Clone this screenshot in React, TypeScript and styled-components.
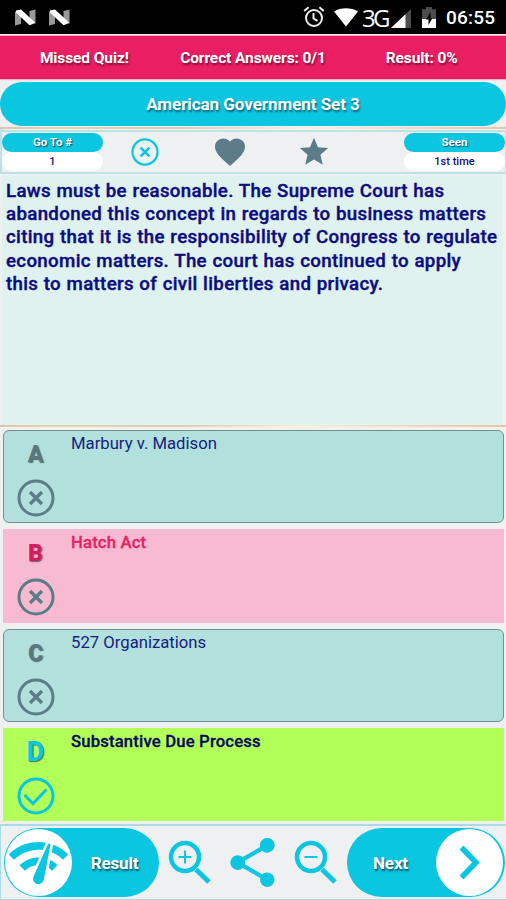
import { ReactNode } from 'react'
import { MdFavorite, MdNetworkCheck, MdShare, MdStar } from 'react-icons/md'
import styled, { createGlobalStyle } from 'styled-components'

type OptionStatus = 'idle' | 'wrong' | 'correct'

interface QuizOption {
  letter: string
  text: string
  status: OptionStatus
}

const options: QuizOption[] = [
  { letter: 'A', text: 'Marbury v. Madison', status: 'idle' },
  { letter: 'B', text: 'Hatch Act', status: 'wrong' },
  { letter: 'C', text: '527 Organizations', status: 'idle' },
  { letter: 'D', text: 'Substantive Due Process', status: 'correct' }
]

const questionLines = [
  'Laws must be reasonable. The Supreme Court has',
  'abandoned this concept in regards to business matters',
  'citing that it is the responsibility of Congress to regulate',
  'economic matters. The court has continued to apply',
  'this to matters of civil liberties and privacy.'
]

const colors = {
  cyan: '#0bc6e0',
  pink: '#e91e63',
  slate: '#5b7c88',
  navy: '#0c0c80',
  page: '#eff0f2'
}

const App = () => (
  <>
    <GlobalStyle />
    <Screen>
      <StatusBar />

      <ScoreBar>
        <Score>Missed Quiz!</Score>
        <Score>Correct Answers: 0/1</Score>
        <Score>Result: 0%</Score>
      </ScoreBar>

      <QuizTitle>American Government Set 3</QuizTitle>
      <Divider />

      <Toolbar>
        <Counter label="Go To #" value="1" />
        <Tools>
          <CrossCircle size={28} color={colors.cyan} />
          <MdFavorite size={36} />
          <MdStar size={34} />
        </Tools>
        <Counter label="Seen" value="1st time" />
      </Toolbar>

      <Question>
        {questionLines.map((line) => (
          <QuestionLine key={line}>{line}</QuestionLine>
        ))}
      </Question>
      <Divider />

      <Options>
        {options.map((option) => (
          <Option key={option.letter} {...option} />
        ))}
      </Options>

      <Footer>
        <ResultButton>
          <Knob>
            <MdNetworkCheck size={65} />
          </Knob>
          <ButtonLabel>Result</ButtonLabel>
        </ResultButton>
        <Actions>
          <Magnifier zoomIn />
          <MdShare size={59} />
          <Magnifier />
        </Actions>
        <NextButton>
          <ButtonLabel>Next</ButtonLabel>
          <Knob>
            <svg width="68" height="68" viewBox="0 0 68 68" fill="none" stroke={colors.cyan} strokeWidth="5.5">
              <path d="M25.5 18.5 40 33.5 25.5 48.5" />
            </svg>
          </Knob>
        </NextButton>
      </Footer>
    </Screen>
  </>
)

export default App

const StatusBar = () => (
  <StatusBarStyled>
    <Notifications>
      <NougatLogo />
      <NougatLogo />
    </Notifications>
    <SystemIcons>
      <svg width="22" height="22" viewBox="0 0 22 22" fill="none" stroke="#eee" strokeWidth="2">
        <circle cx="11" cy="12" r="8" />
        <path d="M10.5 7v5.5l4 2.3M1.2 5 5.6 1.3M20.8 5l-4.4-3.7" />
      </svg>
      <svg width="24" height="19" viewBox="0 0 24 19" fill="#fff">
        <path d="M0 3.5C7-.9 17-.9 24 3.5L12 18.5Z" />
      </svg>
      <NetworkType>3G</NetworkType>
      <Signal width="20" height="19" viewBox="0 0 20 19">
        <path d="M20 0v19H0Z" fill="#4d4d4d" />
        <path d="M14.5 5.2V19H0Z" fill="#fff" />
      </Signal>
      <Battery width="14" height="21" viewBox="0 0 14 21">
        <path d="M4 0h6v2.2h4V21H0V2.2h4Z" fill="#4d4d4d" />
        <path d="M0 12h14v9H0Z" fill="#fff" />
        <path d="M8.5 5 4 12.5h2.5V18L10.5 11H8.5Z" fill="#000" />
      </Battery>
    </SystemIcons>
    <Clock>06:55</Clock>
  </StatusBarStyled>
)

const NougatLogo = () => (
  <svg width="21" height="17" viewBox="0 0 21 17">
    <path d="M0 2.5 6 4v11L0 16.5ZM14.5 2 20.5.5v14l-6 1.5Z" fill="#999" />
    <path d="M1 1.5 6 .5 20 13.5 14.5 16.2 1 3.5Z" fill="#fff" />
  </svg>
)

const Counter = ({ label, value }: { label: string; value: string }) => (
  <CounterStyled>
    <CounterLabel>{label}</CounterLabel>
    <CounterValue>{value}</CounterValue>
  </CounterStyled>
)

const CrossCircle = ({ size, color }: { size: number; color: string }) => (
  <svg width={size} height={size} viewBox="0 0 38 38" fill="none" stroke={color} strokeWidth="3">
    <circle cx="19" cy="19" r="17" />
    <path d="m13 13 12 12M25 13 13 25" strokeWidth="3.4" />
  </svg>
)

const CheckCircle = () => (
  <svg width="38" height="38" viewBox="0 0 38 38" fill="none" stroke={colors.cyan} strokeWidth="3">
    <circle cx="19" cy="19" r="17" />
    <path d="m7.5 18 8.5 8.5L29.5 12.5" />
  </svg>
)

const Magnifier = ({ zoomIn = false }: { zoomIn?: boolean }) => (
  <svg width="43" height="46" viewBox="0 0 43 46" fill="none" stroke={colors.cyan}>
    <circle cx="17" cy="17" r="14" strokeWidth="4.5" />
    <path d="m28 29.5 13 12.5" strokeWidth="5" />
    <path d={zoomIn ? 'M10.5 17h13M17 10.5v13' : 'M10.5 17h13'} strokeWidth="2" />
  </svg>
)

const Option = ({ letter, text, status }: QuizOption) => {
  const icon: ReactNode = status === 'correct' ? <CheckCircle /> : <CrossCircle size={38} color={colors.slate} />

  return (
    <OptionStyled $status={status}>
      <OptionMark>
        <OptionLetter $status={status}>{letter}</OptionLetter>
        {icon}
      </OptionMark>
      <OptionText $status={status}>{text}</OptionText>
    </OptionStyled>
  )
}

const GlobalStyle = createGlobalStyle`
  body {
    margin: 0;
    overflow: hidden;
    font-family: Roboto, 'Liberation Sans', sans-serif;
  }

  * {
    box-sizing: border-box;
  }

  svg {
    display: block;
    flex-shrink: 0;
  }
`

const Screen = styled.div`
  width: 506px;
  height: 900px;
  display: flex;
  flex-direction: column;
  background: ${colors.page};
`

const StatusBarStyled = styled.div`
  height: 34px;
  flex-shrink: 0;
  display: flex;
  align-items: center;
  padding: 0 10px 0 15px;
  background: #000;
  color: #fff;
`

const Notifications = styled.div`
  display: flex;
  gap: 13px;
`

const SystemIcons = styled.div`
  display: flex;
  align-items: center;
  margin-left: auto;

  > svg:nth-child(2) {
    margin-left: 9px;
  }
`

const NetworkType = styled.span`
  width: 26px;
  margin: 0 3px 0 4px;
  font: 400 24px/34px 'Open Sans', sans-serif;
  letter-spacing: -2.8px;
  padding-top: 1px;
`

const Signal = styled.svg`
  margin-top: 2px;
`

const Battery = styled.svg`
  margin: 0 10px 0 11px;
`

const Clock = styled.span`
  width: 50px;
  font-size: 19px;
  font-weight: 500;
  line-height: 34px;
  letter-spacing: 0.2px;
  padding-top: 2px;
`

const ScoreBar = styled.div`
  height: 43px;
  flex-shrink: 0;
  margin: 2px 0 3px;
  display: grid;
  grid-template-columns: repeat(3, 1fr);
  align-items: center;
  background: ${colors.pink};
  box-shadow: 0 0 1px 1px #f4b0c6;
`

const Score = styled.span`
  color: #fff;
  text-align: center;
  white-space: nowrap;
  font-size: 15.5px;
  font-weight: 700;
  letter-spacing: -0.1px;
  padding-top: 1px;
  text-shadow: 1px 2px 2px rgba(60, 0, 30, 0.6);
`

const QuizTitle = styled.h1`
  height: 44px;
  flex-shrink: 0;
  margin: 0 0 1px;
  border-radius: 22px;
  background: ${colors.cyan};
  color: #fff;
  text-align: center;
  font-size: 17px;
  font-weight: 700;
  line-height: 45px;
  letter-spacing: -0.05px;
  text-shadow: 1px 2px 2px rgba(0, 60, 80, 0.7);
`

const Divider = styled.div`
  height: 3px;
  flex-shrink: 0;
  background: linear-gradient(90deg, #dfc3ad, #ddd7ac 10%, #d9cdb4 35%, #f8f1de 60%, #e2c7a4);
  border-bottom: 1px solid #fbf3ea;
`

const Toolbar = styled.div`
  height: 44px;
  flex-shrink: 0;
  margin-bottom: 2px;
  display: flex;
  justify-content: space-between;
  border: solid #bce3ea;
  border-width: 2px 1px 2px 2px;
`

const Tools = styled.div`
  display: flex;
  align-items: center;
  justify-content: space-between;
  width: 200px;
  margin: 0 45px 0 0;
  color: ${colors.slate};

  > svg:nth-child(2) {
    transform: translateX(2px);
  }
`

const CounterStyled = styled.div`
  width: 101px;
  display: flex;
  flex-direction: column;
  padding-top: 0.5px;
`

const CounterLabel = styled.div`
  height: 19px;
  border-radius: 10px;
  background: ${colors.cyan};
  color: #fff;
  text-align: center;
  font-size: 11.5px;
  font-weight: 700;
  line-height: 19px;
  text-shadow: 1px 1px 1px rgba(0, 50, 70, 0.8);
`

const CounterValue = styled.div`
  height: 19px;
  border-radius: 10px;
  background: #fff;
  color: ${colors.navy};
  text-align: center;
  font-size: 11px;
  font-weight: 500;
  line-height: 19px;
`

const Question = styled.div`
  height: 249px;
  flex-shrink: 0;
  margin: 0 3px 0 2px;
  padding: 4px 0 0 4px;
  background: #dff2f0;
  color: ${colors.navy};
`

const QuestionLine = styled.div`
  white-space: nowrap;
  font-size: 18.7px;
  font-weight: 500;
  line-height: 23.2px;
  letter-spacing: 0.33px;
  word-spacing: 0.5px;
  -webkit-text-stroke: 0.4px currentColor;
`

const Options = styled.div`
  display: flex;
  flex-direction: column;
  gap: 6px;
  padding: 2px 2px 0 3px;
`

const optionBackground = {
  idle: '#b2e1dd',
  wrong: '#f7bad0',
  correct: '#b2ff59'
}

const letterColor = {
  idle: '#587980',
  wrong: '#d81b60',
  correct: colors.cyan
}

const textColor = {
  idle: '#152080',
  wrong: colors.pink,
  correct: '#0a0a5c'
}

const OptionStyled = styled.div<{ $status: OptionStatus }>`
  height: 93.3px;
  display: flex;
  border: 1px solid ${({ $status }) => ($status === 'idle' ? '#75918f' : optionBackground[$status])};
  border-radius: ${({ $status }) => ($status === 'idle' ? '6px' : '0')};
  background: ${({ $status }) => optionBackground[$status]};
`

const OptionMark = styled.div`
  width: 63px;
  display: flex;
  flex-direction: column;
  align-items: center;
  padding-top: 9px;
`

const OptionLetter = styled.span<{ $status: OptionStatus }>`
  height: 39px;
  color: ${({ $status }) => letterColor[$status]};
  font-size: ${({ $status }) => ($status === 'correct' ? '27px' : '23px')};
  font-weight: 800;
  line-height: 29px;
  text-shadow: 1px 1px 1px rgba(40, 60, 70, 0.7);
`

const OptionText = styled.span<{ $status: OptionStatus }>`
  padding: 3px 0 0 4px;
  color: ${({ $status }) => textColor[$status]};
  font-size: 16.7px;
  font-weight: ${({ $status }) => ($status === 'idle' ? 400 : 500)};
  line-height: 20px;
  letter-spacing: ${({ $status }) => ($status === 'idle' ? '0' : '0.16px')};
  -webkit-text-stroke: ${({ $status }) => ($status === 'idle' ? '0' : '0.3px currentColor')};
`

const Footer = styled.div`
  flex: 1;
  min-height: 0;
  margin-top: 3px;
  display: flex;
  align-items: center;
  justify-content: space-between;
  border: 2px solid #a9dce8;
  border-width: 2px 0 1px 1px;
`

const PillButton = styled.div`
  height: 69px;
  display: flex;
  align-items: center;
  border-radius: 35px;
  background: ${colors.cyan};
`

const ResultButton = styled(PillButton)`
  width: 155px;
  margin-left: 3px;
  padding-left: 0.7px;
  gap: 19px;
`

const NextButton = styled(PillButton)`
  width: 158px;
  margin-right: 1px;
  padding: 0 2px 0 26px;
  justify-content: space-between;
`

const Knob = styled.div`
  width: 67px;
  height: 67px;
  flex-shrink: 0;
  display: flex;
  align-items: center;
  justify-content: center;
  border-radius: 50%;
  background: #fff;
  color: ${colors.cyan};
`

const ButtonLabel = styled.span`
  color: #fff;
  font-size: 17px;
  font-weight: 700;
  letter-spacing: -0.15px;
  text-shadow: 1px 2px 2px rgba(0, 50, 70, 0.8);
`

const Actions = styled.div`
  width: 169px;
  margin-right: 2px;
  display: flex;
  align-items: center;
  justify-content: space-between;
  color: ${colors.cyan};
`
